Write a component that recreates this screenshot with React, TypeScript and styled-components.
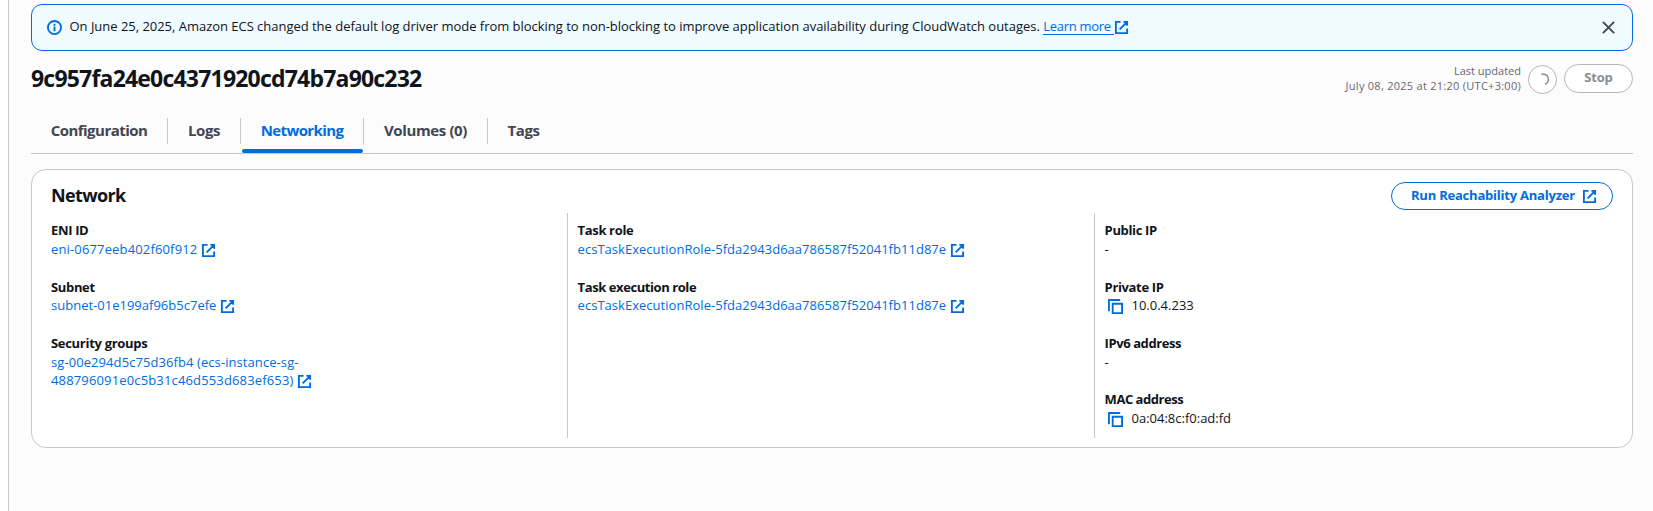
import React from 'react';
import styled, { createGlobalStyle } from 'styled-components';

const color = {
  text: '#0f141a',
  secondary: '#424650',
  muted: '#656871',
  disabled: '#8c8c94',
  link: '#006ce0',
  border: '#c6c6cd',
  page: '#fcfcfd',
};

const GlobalStyle = createGlobalStyle`
  * { box-sizing: border-box; }
  body {
    margin: 0;
    background: #fff;
    color: ${color.text};
    font: 400 13px/18px 'Open Sans', 'Noto Sans', sans-serif;
  }
`;

const Page = styled.div`
  display: flex;
  height: 511px;
  overflow: hidden;
  padding-left: 8px;
`;

const Main = styled.main`
  flex: 1;
  min-width: 0;
  border-left: 1px solid ${color.border};
  background: ${color.page};
  padding: 4px 20px 0 22px;
`;

const Alert = styled.section`
  display: flex;
  align-items: center;
  height: 47px;
  padding: 0 16px 1px 15px;
  border: 1px solid ${color.link};
  border-radius: 11px;
  background: #f0fbff;
`;

const AlertText = styled.p`
  flex: 1;
  margin: 0 0 2px 7.5px;
  white-space: nowrap;
  letter-spacing: -0.024px;
`;

const LearnMore = styled.a`
  display: inline-block;
  height: 18px;
  margin-left: 3.5px;
  padding-right: 3.5px;
  border-bottom: 1px solid ${color.link};
  color: ${color.link};
  letter-spacing: -0.3px;
`;

const Icon = styled.svg<{ $tone?: string }>`
  flex: none;
  width: 15px;
  height: 15px;
  vertical-align: -4px;
  color: ${(p) => p.$tone ?? color.link};
  fill: none;
  stroke: currentColor;
  stroke-width: 2;
`;

const TitleRow = styled.header`
  display: flex;
  justify-content: space-between;
  align-items: flex-start;
  height: 32px;
  margin-top: 12px;
`;

const Title = styled.h1`
  margin: 0;
  font-size: 23px;
  line-height: 31px;
  font-weight: 700;
  letter-spacing: -0.8px;
`;

const Actions = styled.div`
  display: flex;
  align-items: flex-start;
  gap: 7px;
`;

const Updated = styled.div`
  text-align: right;
  font-size: 11px;
  line-height: 15px;
  color: ${color.muted};
`;

const UpdatedDate = styled.div`
  letter-spacing: 0.27px;
`;

const RefreshButton = styled.button`
  display: grid;
  place-items: center;
  width: 29px;
  height: 29px;
  margin-top: 2px;
  padding: 0;
  border: 1px solid #b4b4bb;
  border-radius: 50%;
  background: #fff;
`;

const StopButton = styled.button`
  width: 69px;
  height: 29px;
  margin-top: 1px;
  padding: 0 0 3px;
  border: 1px solid #b4b4bb;
  border-radius: 15px;
  background: #fff;
  color: ${color.disabled};
  font: 700 13px/18px 'Open Sans', sans-serif;
  letter-spacing: -0.2px;
`;

const Tabs = styled.nav`
  display: flex;
  align-items: flex-start;
  height: 43px;
  margin-top: 16px;
  padding-top: 7px;
  border-bottom: 1px solid ${color.border};
`;

const Tab = styled.div<{ $width: number }>`
  width: ${(p) => p.$width}px;
`;

const TabLabel = styled.div<{ $active?: boolean; $last?: boolean; $track: number }>`
  height: 26px;
  border-right: 1px solid ${(p) => (p.$last ? 'transparent' : color.border)};
  text-align: center;
  font-size: 15px;
  line-height: 24px;
  font-weight: 700;
  letter-spacing: ${(p) => p.$track}px;
  white-space: nowrap;
  color: ${(p) => (p.$active ? color.link : color.secondary)};
`;

const TabBar = styled.div`
  height: 4px;
  margin: 5px 1px 0;
  border-radius: 2px;
  background: ${color.link};
`;

const Card = styled.section`
  height: 279px;
  margin-top: 15px;
  padding: 12px 19px 9px;
  border: 1px solid ${color.border};
  border-radius: 15px;
  background: #fff;
`;

const CardHeader = styled.div`
  display: flex;
  justify-content: space-between;
  height: 28px;
  margin-bottom: 3px;
`;

const CardTitle = styled.h2`
  margin: 0;
  font-size: 18px;
  line-height: 26px;
  font-weight: 700;
  letter-spacing: -0.65px;
`;

const AnalyzerButton = styled.button`
  display: flex;
  align-items: center;
  justify-content: space-between;
  width: 222px;
  height: 28px;
  padding: 0 15px 0 19px;
  border: 1px solid ${color.link};
  border-radius: 14px;
  background: #fff;
  color: ${color.link};
  font: 700 13px/18px 'Open Sans', sans-serif;
  letter-spacing: -0.22px;
`;

const ButtonLabel = styled.span`
  padding-bottom: 2px;
`;

const Columns = styled.div`
  display: grid;
  grid-template-columns: 516px 527px 1fr;
  height: 225px;
`;

const Column = styled.dl<{ $divided?: boolean }>`
  display: flex;
  flex-direction: column;
  gap: 19.6px;
  margin: 0;
  padding: 8.2px 0 0 ${(p) => (p.$divided ? 9.6 : 0)}px;
  border-left: ${(p) => (p.$divided ? `1px solid ${color.border}` : '0')};
`;

const Field = styled.div``;

const Label = styled.dt<{ $track?: number }>`
  margin-bottom: 0.8px;
  font-weight: 700;
  letter-spacing: ${(p) => p.$track ?? -0.35}px;
`;

const Value = styled.dd`
  height: 18px;
  margin: 0;
  white-space: nowrap;
`;

const Link = styled.a<{ $track?: number }>`
  margin-right: 4px;
  color: ${color.link};
  letter-spacing: ${(p) => p.$track ?? 0}px;
`;

const CopyIcon = styled(Icon)`
  margin: 0 8.5px 0 3.4px;
`;

const External = () => (
  <Icon viewBox="0 0 16 16">
    <path d="M10 2h4v4M6 10l8-8M14 9.05V14H2V2h5" />
  </Icon>
);

const Copy = () => (
  <CopyIcon viewBox="0 0 16 16">
    <path d="M15 5H5v10h10V5ZM13 1H1v12" />
  </CopyIcon>
);

const tabs = [
  { label: 'Configuration', width: 137, track: -0.53 },
  { label: 'Logs', width: 73, track: -0.4 },
  { label: 'Networking', width: 123, track: -0.6, active: true },
  { label: 'Volumes (0)', width: 124, track: -0.37 },
  { label: 'Tags', width: 72, track: -0.47 },
];

const role = 'ecsTaskExecutionRole-5fda2943d6aa786587f52041fb11d87e';

export default function App() {
  return (
    <Page>
      <GlobalStyle />
      <Main>
        <Alert>
          <Icon viewBox="0 0 16 16">
            <circle cx="8" cy="8" r="7" />
            <path d="M8 7v5M8 4v2" />
          </Icon>
          <AlertText>
            On June 25, 2025, Amazon ECS changed the default log driver mode from blocking to
            non-blocking to improve application availability during CloudWatch outages.
            <LearnMore>Learn more</LearnMore>
            <External />
          </AlertText>
          <Icon viewBox="0 0 16 16" $tone={color.secondary}>
            <path d="m2 2 12 12M14 2 2 14" />
          </Icon>
        </Alert>

        <TitleRow>
          <Title>9c957fa24e0c4371920cd74b7a90c232</Title>
          <Actions>
            <Updated>
              <div>Last updated</div>
              <UpdatedDate>July 08, 2025 at 21:20 (UTC+3:00)</UpdatedDate>
            </Updated>
            <RefreshButton aria-label="Refresh">
              <Icon viewBox="0 0 14.4 14.4" $tone={color.disabled}>
                <path d="M6 2.3A5 5 0 0 1 9.6 11.8" strokeWidth="1.4" />
              </Icon>
            </RefreshButton>
            <StopButton>Stop</StopButton>
          </Actions>
        </TitleRow>

        <Tabs>
          {tabs.map((t, i) => (
            <Tab key={t.label} $width={t.width}>
              <TabLabel $active={t.active} $last={i === tabs.length - 1} $track={t.track}>
                {t.label}
              </TabLabel>
              {t.active && <TabBar />}
            </Tab>
          ))}
        </Tabs>

        <Card>
          <CardHeader>
            <CardTitle>Network</CardTitle>
            <AnalyzerButton>
              <ButtonLabel>Run Reachability Analyzer</ButtonLabel>
              <External />
            </AnalyzerButton>
          </CardHeader>
          <Columns>
            <Column>
              <Field>
                <Label>ENI ID</Label>
                <Value>
                  <Link $track={0.15}>eni-0677eeb402f60f912</Link>
                  <External />
                </Value>
              </Field>
              <Field>
                <Label>Subnet</Label>
                <Value>
                  <Link $track={0.01}>subnet-01e199af96b5c7efe</Link>
                  <External />
                </Value>
              </Field>
              <Field>
                <Label $track={-0.3}>Security groups</Label>
                <Value>
                  <Link $track={0.08}>sg-00e294d5c75d36fb4 (ecs-instance-sg-</Link>
                  <br />
                  <Link $track={0.15}>488796091e0c5b31c46d553d683ef653)</Link>
                  <External />
                </Value>
              </Field>
            </Column>
            <Column $divided>
              <Field>
                <Label>Task role</Label>
                <Value>
                  <Link $track={0.03}>{role}</Link>
                  <External />
                </Value>
              </Field>
              <Field>
                <Label $track={-0.42}>Task execution role</Label>
                <Value>
                  <Link $track={0.03}>{role}</Link>
                  <External />
                </Value>
              </Field>
            </Column>
            <Column $divided>
              <Field>
                <Label>Public IP</Label>
                <Value>-</Value>
              </Field>
              <Field>
                <Label>Private IP</Label>
                <Value>
                  <Copy />
                  10.0.4.233
                </Value>
              </Field>
              <Field>
                <Label $track={-0.42}>IPv6 address</Label>
                <Value>-</Value>
              </Field>
              <Field>
                <Label $track={-0.47}>MAC address</Label>
                <Value>
                  <Copy />
                  0a:04:8c:f0:ad:fd
                </Value>
              </Field>
            </Column>
          </Columns>
        </Card>
      </Main>
    </Page>
  );
}
